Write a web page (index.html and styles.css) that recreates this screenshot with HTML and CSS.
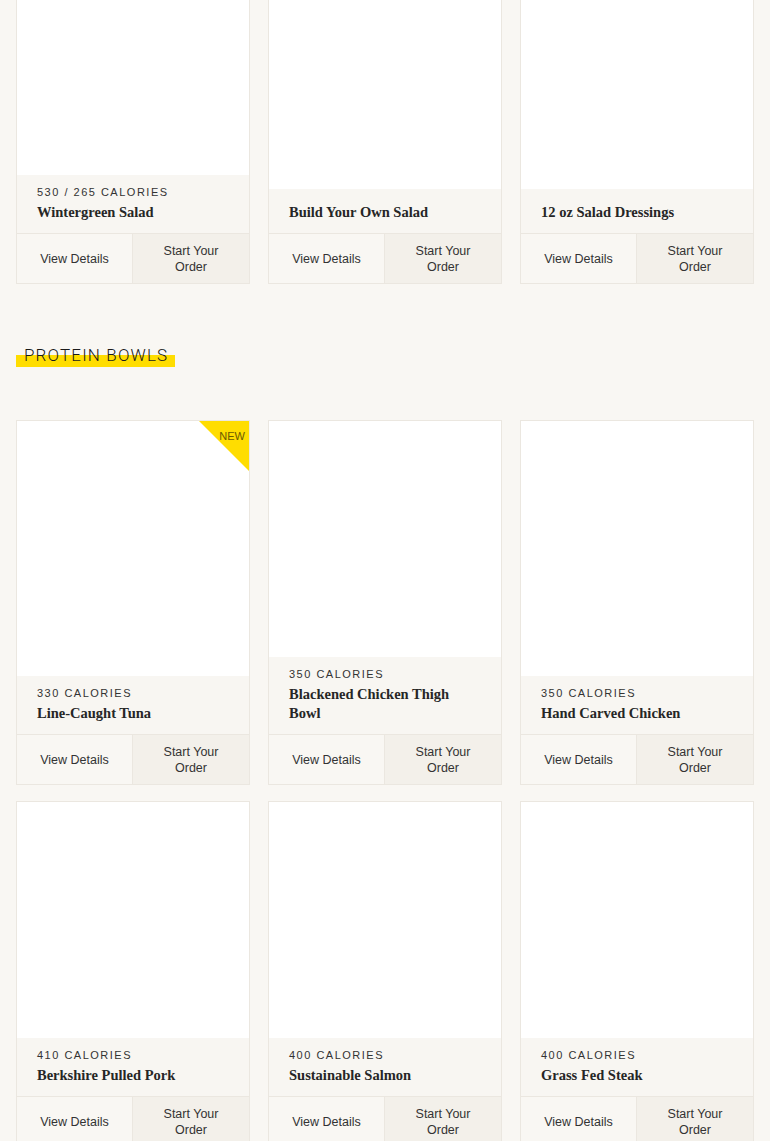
FILE: index.html
```html
<!DOCTYPE html>
<html lang="en">
<head>
    <meta charset="UTF-8">
    <meta name="viewport" content="width=device-width, initial-scale=1.0">
    <title>Menu - Salads &amp; Protein Bowls</title>
    <link rel="stylesheet" href="styles.css">
</head>
<body>
    <main class="menu">

        <!-- Salads -->
        <section class="menu-section menu-section--first">
            <div class="product-grid">
                <article class="product-card">
                    <div class="product-image"></div>
                    <div class="product-info">
                        <p class="product-calories">530 / 265 Calories</p>
                        <h3 class="product-name">Wintergreen Salad</h3>
                    </div>
                    <div class="product-actions">
                        <a href="#" class="action-btn">View Details</a>
                        <a href="#" class="action-btn action-btn--order">Start Your Order</a>
                    </div>
                </article>
                <article class="product-card">
                    <div class="product-image"></div>
                    <div class="product-info">
                        <h3 class="product-name">Build Your Own Salad</h3>
                    </div>
                    <div class="product-actions">
                        <a href="#" class="action-btn">View Details</a>
                        <a href="#" class="action-btn action-btn--order">Start Your Order</a>
                    </div>
                </article>
                <article class="product-card">
                    <div class="product-image"></div>
                    <div class="product-info">
                        <h3 class="product-name">12 oz Salad Dressings</h3>
                    </div>
                    <div class="product-actions">
                        <a href="#" class="action-btn">View Details</a>
                        <a href="#" class="action-btn action-btn--order">Start Your Order</a>
                    </div>
                </article>
            </div>
        </section>

        <!-- Protein Bowls -->
        <section class="menu-section">
            <h2 class="section-title"><span>Protein Bowls</span></h2>
            <div class="product-grid">
                <article class="product-card">
                    <span class="badge-new">NEW</span>
                    <div class="product-image"></div>
                    <div class="product-info">
                        <p class="product-calories">330 Calories</p>
                        <h3 class="product-name">Line-Caught Tuna</h3>
                    </div>
                    <div class="product-actions">
                        <a href="#" class="action-btn">View Details</a>
                        <a href="#" class="action-btn action-btn--order">Start Your Order</a>
                    </div>
                </article>
                <article class="product-card">
                    <div class="product-image"></div>
                    <div class="product-info">
                        <p class="product-calories">350 Calories</p>
                        <h3 class="product-name">Blackened Chicken Thigh Bowl</h3>
                    </div>
                    <div class="product-actions">
                        <a href="#" class="action-btn">View Details</a>
                        <a href="#" class="action-btn action-btn--order">Start Your Order</a>
                    </div>
                </article>
                <article class="product-card">
                    <div class="product-image"></div>
                    <div class="product-info">
                        <p class="product-calories">350 Calories</p>
                        <h3 class="product-name">Hand Carved Chicken</h3>
                    </div>
                    <div class="product-actions">
                        <a href="#" class="action-btn">View Details</a>
                        <a href="#" class="action-btn action-btn--order">Start Your Order</a>
                    </div>
                </article>
                <article class="product-card">
                    <div class="product-image"></div>
                    <div class="product-info">
                        <p class="product-calories">410 Calories</p>
                        <h3 class="product-name">Berkshire Pulled Pork</h3>
                    </div>
                    <div class="product-actions">
                        <a href="#" class="action-btn">View Details</a>
                        <a href="#" class="action-btn action-btn--order">Start Your Order</a>
                    </div>
                </article>
                <article class="product-card">
                    <div class="product-image"></div>
                    <div class="product-info">
                        <p class="product-calories">400 Calories</p>
                        <h3 class="product-name">Sustainable Salmon</h3>
                    </div>
                    <div class="product-actions">
                        <a href="#" class="action-btn">View Details</a>
                        <a href="#" class="action-btn action-btn--order">Start Your Order</a>
                    </div>
                </article>
                <article class="product-card">
                    <div class="product-image"></div>
                    <div class="product-info">
                        <p class="product-calories">400 Calories</p>
                        <h3 class="product-name">Grass Fed Steak</h3>
                    </div>
                    <div class="product-actions">
                        <a href="#" class="action-btn">View Details</a>
                        <a href="#" class="action-btn action-btn--order">Start Your Order</a>
                    </div>
                </article>
            </div>
        </section>

    </main>
</body>
</html>
```

FILE: styles.css
```css
* {
    margin: 0;
    padding: 0;
    box-sizing: border-box;
}

body {
    background: #f9f7f3;
    color: #2a2a2a;
    font-family: 'Liberation Sans', Arial, sans-serif;
    overflow: hidden;
}

/* Page wrapper */
.menu {
    padding: 0 16px;
}

/* the salads row is already scrolled partly out of view */
.menu-section--first {
    margin-top: -62px;
}

/* Section heading with the yellow marker underline */
.section-title {
    margin: 59px 0 53px;
    font-family: 'Roboto', 'Open Sans', sans-serif;
    font-weight: 300;
    font-size: 17px;
    line-height: 24px;
    letter-spacing: 1.15px;
    text-transform: uppercase;
    color: #1a1a1a;
}

.section-title span {
    display: inline-block;
    padding: 0 7px 0 8px;
    background: linear-gradient(transparent 50%, #ffdd00 50%);
}

/* Product grid */
.product-grid {
    display: grid;
    grid-template-columns: repeat(3, 1fr);
    column-gap: 18px;
    row-gap: 16px;
}

.product-card {
    position: relative;
    display: flex;
    flex-direction: column;
    border: 1px solid #ebe7e0;
    background: #fff;
}

.product-image {
    flex: 1;
    min-height: 236px;
    background: #fff;
}

.product-info {
    background: #f8f6f2;
    padding: 10px 24px 11px 20px;
}

.product-calories {
    font-size: 11px;
    line-height: 14px;
    letter-spacing: 1.5px;
    text-transform: uppercase;
    color: #333;
}

.product-name {
    margin-top: 4px;
    font-family: 'Liberation Serif', 'Times New Roman', serif;
    font-weight: 700;
    font-size: 14.5px;
    line-height: 19px;
    color: #262626;
}

/* Card buttons */
.product-actions {
    display: grid;
    grid-template-columns: 1fr 1fr;
    border-top: 1px solid #ebe7e0;
    height: 50px;
}

.action-btn {
    display: flex;
    align-items: center;
    justify-content: center;
    padding: 0 20px;
    background: #f9f7f3;
    color: #333;
    font-size: 12.5px;
    line-height: 16px;
    text-align: center;
    text-decoration: none;
}

.action-btn:first-child {
    border-right: 1px solid #ebe7e0;
}

.action-btn--order {
    background: #f3f0ea;
}

/* Corner ribbon for new items */
.badge-new {
    position: absolute;
    top: 0;
    right: 0;
    width: 50px;
    height: 50px;
    padding: 9px 4px 0 0;
    background: #ffdd00;
    clip-path: polygon(0 0, 100% 0, 100% 100%);
    color: #6b5a00;
    font-size: 11px;
    line-height: 13px;
    text-align: right;
}
```
